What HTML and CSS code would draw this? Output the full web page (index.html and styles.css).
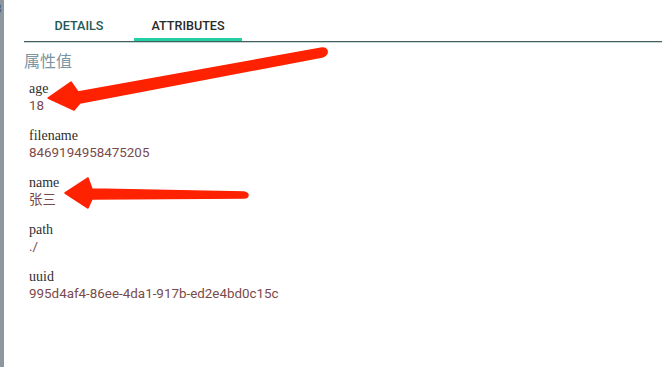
FILE: index.html
```html
<!DOCTYPE html>
<html>
<head>
<meta charset="utf-8">
<link rel="stylesheet" href="styles.css">
</head>
<body>
<div class="page">
  <div class="strip"><span class="strip-digit">3</span></div>
  <div class="main">
    <div class="tabs">
      <div class="tab">DETAILS</div>
      <div class="tab active">ATTRIBUTES</div>
    </div>
    <div class="panel">
      <div class="heading">属性值</div>
      <div class="item"><div class="label">age</div><div class="value">18</div></div>
      <div class="item"><div class="label">filename</div><div class="value">8469194958475205</div></div>
      <div class="item"><div class="label">name</div><div class="value">张三</div></div>
      <div class="item"><div class="label">path</div><div class="value">./</div></div>
      <div class="item"><div class="label">uuid</div><div class="value">995d4af4-86ee-4da1-917b-ed2e4bd0c15c</div></div>
    </div>
  </div>
  <svg class="overlay" width="662" height="367" viewBox="0 0 662 367">
    <path fill="#ff2200" stroke="#ff2200" stroke-width="1.5" stroke-linejoin="round"
      d="M48 98 L71 82 L78 92 L322 48 Q328 48 327 53 Q326 56 322 57 L80 103 L74 110 Z"/>
    <path fill="#ff2200" stroke="#ff2200" stroke-width="1.5" stroke-linejoin="round"
      d="M65 193 L88 178 L92 189 L244 192 Q248 193 248 195 Q248 198 244 198 L92 199 L88 208 Z"/>
  </svg>
</div>
</body>
</html>
```

FILE: styles.css
```css
html, body {
  margin: 0;
  padding: 0;
  background: #ffffff;
}

.page {
  position: relative;
  width: 662px;
  height: 367px;
  display: flex;
  overflow: hidden;
}

.strip {
  width: 4px;
  flex: 0 0 4px;
  background: #8e979d;
  overflow: hidden;
  position: relative;
}

.strip-digit {
  display: block;
  margin-left: -5px;
  margin-top: 2px;
  font-family: "Roboto", sans-serif;
  font-size: 12px;
  line-height: 14px;
  color: #4c5a62;
}

.main {
  flex: 1;
  padding-left: 20px;
  display: flex;
  flex-direction: column;
}

.tabs {
  display: flex;
  height: 41px;
  border-bottom: 1px solid #45615f;
  box-shadow: 0 1px 0 #c4d5d5;
}

.tab {
  box-sizing: border-box;
  width: 110px;
  display: flex;
  align-items: center;
  justify-content: center;
  padding-top: 13px;
  font-family: "Roboto", sans-serif;
  font-weight: 500;
  font-size: 12.6px;
  color: #1e5955;
  border-bottom: 3px solid transparent;
}

.tab.active {
  width: 108px;
  color: #2a2a2a;
  border-bottom-color: #22cfa3;
}

.panel {
  display: flex;
  flex-direction: column;
}

.heading {
  margin-top: 8px;
  font-family: "Noto Sans CJK SC", sans-serif;
  font-size: 16px;
  line-height: 20px;
  color: #7a94a1;
}

.item {
  padding-left: 5px;
  margin-top: 10px;
}

.item + .item {
  margin-top: 13px;
}

.label {
  font-family: "Liberation Serif", serif;
  font-size: 14px;
  line-height: 17px;
  color: #2e2e2e;
}

.value {
  font-family: "Roboto", "Noto Sans CJK SC", sans-serif;
  font-size: 13.4px;
  line-height: 17px;
  color: #7a4a4a;
}

.overlay {
  position: absolute;
  left: 0;
  top: 0;
  pointer-events: none;
}
```
